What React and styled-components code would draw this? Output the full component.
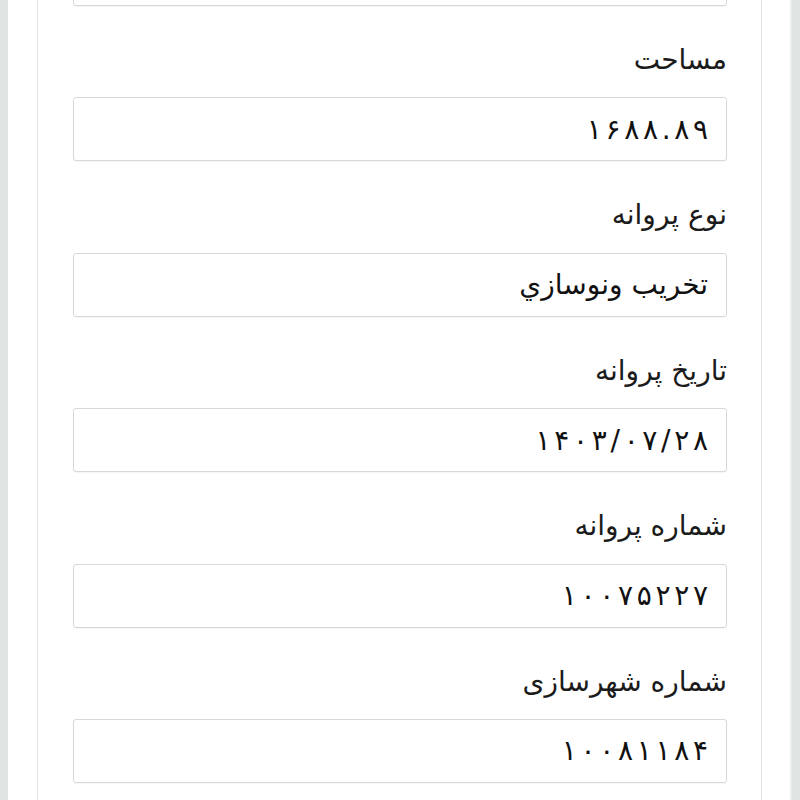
import React from "react";
import styled, { createGlobalStyle } from "styled-components";

const GlobalStyle = createGlobalStyle`
  html, body {
    margin: 0;
    padding: 0;
    background: #dfe5e3;
    font-family: "DejaVu Sans", "Noto Sans", sans-serif;
  }
`;

const Page = styled.div`
  height: 800px;
  overflow: hidden;
  padding: 0 8px;
  box-sizing: border-box;
`;

const Sheet = styled.div`
  height: 100%;
  background: #ffffff;
  padding: 0 28px 0 29px;
  border-right: 2px solid #eaeeed;
`;

const Card = styled.div`
  height: 100%;
  display: flex;
  flex-direction: column;
  background: #ffffff;
  border-left: 1px solid #e3e3e3;
  border-right: 1px solid #e3e3e3;
  padding: 0 34px 0 35px;
  direction: rtl;
`;

const Form = styled.div`
  display: flex;
  flex-direction: column;
  margin-top: -58px;
`;

const Label = styled.div`
  margin: 36px 0 19.4px;
  height: 36px;
  line-height: 36px;
  font-size: 28px;
  color: #1b1b1b;
  text-align: right;
`;

const Box = styled.div`
  height: 64px;
  box-sizing: border-box;
  border: 1px solid #d8d8d8;
  border-radius: 3px;
  padding: 0 18px;
  display: flex;
  align-items: center;
  font-size: 28px;
  color: #111111;
  box-shadow: 0 1px 1px rgba(0, 0, 0, 0.04);
`;

/* Persian digits are spaced wider than DejaVu sets them; chrome ignores
   letter-spacing for arabic script, so lay the digits out one by one */
const Digits = styled.span`
  display: flex;
  direction: ltr;
  gap: 3.7px;
`;

const fields = [
  { label: "مساحت", value: "۱۶۸۸.۸۹", numeric: true },
  { label: "نوع پروانه", value: "تخریب ونوسازي" },
  { label: "تاریخ پروانه", value: "۱۴۰۳/۰۷/۲۸", numeric: true },
  { label: "شماره پروانه", value: "۱۰۰۷۵۲۲۷", numeric: true },
  { label: "شماره شهرسازی", value: "۱۰۰۸۱۱۸۴", numeric: true },
];

export default function App() {
  return (
    <>
      <GlobalStyle />
      <Page>
        <Sheet>
          <Card>
            <Form>
              <Box />
              {fields.map((f) => (
                <React.Fragment key={f.label}>
                  <Label>{f.label}</Label>
                  <Box>
                    {f.numeric ? (
                      <Digits>
                        {[...f.value].map((ch, i) => (
                          <span key={i}>{ch}</span>
                        ))}
                      </Digits>
                    ) : (
                      f.value
                    )}
                  </Box>
                </React.Fragment>
              ))}
            </Form>
          </Card>
        </Sheet>
      </Page>
    </>
  );
}
